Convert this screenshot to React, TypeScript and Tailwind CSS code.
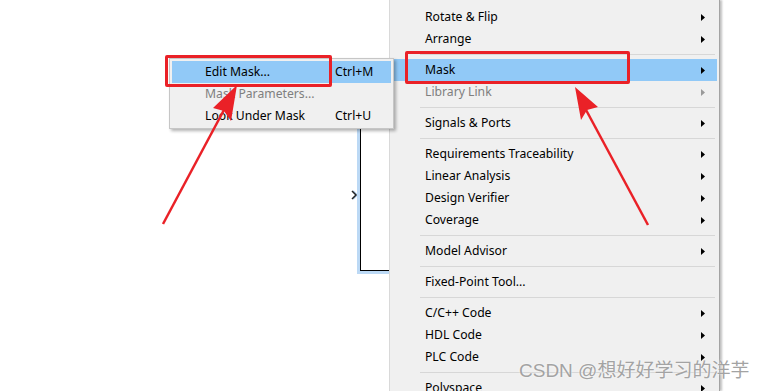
import React from "react";

type Item =
  | { kind: "item"; label: string; sub?: boolean; disabled?: boolean; active?: boolean }
  | { kind: "sep" };

const mainItems: Item[] = [
  { kind: "item", label: "Rotate & Flip", sub: true },
  { kind: "item", label: "Arrange", sub: true },
  { kind: "sep" },
  { kind: "item", label: "Mask", sub: true, active: true },
  { kind: "item", label: "Library Link", sub: true, disabled: true },
  { kind: "sep" },
  { kind: "item", label: "Signals & Ports", sub: true },
  { kind: "sep" },
  { kind: "item", label: "Requirements Traceability", sub: true },
  { kind: "item", label: "Linear Analysis", sub: true },
  { kind: "item", label: "Design Verifier", sub: true },
  { kind: "item", label: "Coverage", sub: true },
  { kind: "sep" },
  { kind: "item", label: "Model Advisor", sub: true },
  { kind: "sep" },
  { kind: "item", label: "Fixed-Point Tool..." },
  { kind: "sep" },
  { kind: "item", label: "C/C++ Code", sub: true },
  { kind: "item", label: "HDL Code", sub: true },
  { kind: "item", label: "PLC Code", sub: true },
  { kind: "sep" },
  { kind: "item", label: "Polyspace", sub: true },
];

const maskItems = [
  { label: "Edit Mask...", key: "Ctrl+M", active: true },
  { label: "Mask Parameters...", key: "", disabled: true },
  { label: "Look Under Mask", key: "Ctrl+U" },
];

const font = { fontFamily: '"Noto Sans", "Liberation Sans", sans-serif' };

function SubArrow({ disabled }: { disabled?: boolean }) {
  return (
    <svg width="4" height="7" viewBox="0 0 4 7" className="shrink-0">
      <polygon points="0,0 4,3.5 0,7" fill={disabled ? "#9a9a9a" : "#000"} />
    </svg>
  );
}

function MainMenu() {
  return (
    <div className="absolute left-[389px] top-0 w-[331px] h-[391px] bg-[#f0f0f0] border-l border-[#d9d9d9] border-r border-r-[#a3a3a3] shadow-[2px_0_2px_rgba(0,0,0,0.25)] pt-[6px] px-[2px]">
      {mainItems.map((it, i) =>
        it.kind === "sep" ? (
          <div key={i} className="h-[9px] flex items-center pl-[28px] pr-[2px]">
            <div className="h-px w-full bg-[#d7d7d7]" />
          </div>
        ) : (
          <div
            key={i}
            className={`h-[22px] flex items-center pl-[33px] pr-[12px] text-[12.2px] ${
              it.active ? "bg-[#91c9f7]" : ""
            } ${it.disabled ? "text-[#7f7f7f]" : "text-black"}`}
          >
            <span className="flex-1 whitespace-nowrap">{it.label}</span>
            {it.sub && <SubArrow disabled={it.disabled} />}
          </div>
        )
      )}
    </div>
  );
}

function MaskMenu() {
  return (
    <div className="absolute left-[169px] top-[58px] w-[225px] bg-[#f0f0f0] border border-[#c6c6c6] shadow-[2px_2px_3px_rgba(0,0,0,0.3)] pt-[2px] pb-px px-[2px]">
      {maskItems.map((it) => (
        <div
          key={it.label}
          className={`h-[22px] flex items-center pl-[33px] text-[12.2px] ${
            it.active ? "bg-[#91c9f7]" : ""
          } ${it.disabled ? "text-[#7f7f7f]" : "text-black"}`}
        >
          <span className="w-[130px] whitespace-nowrap">{it.label}</span>
          <span className="whitespace-nowrap">{it.key}</span>
        </div>
      ))}
    </div>
  );
}

function Block() {
  return (
    <>
      <div className="absolute left-[360px] top-[110px] w-[40px] h-[161px] border-l border-b border-black shadow-[-3px_3px_0_#bcd9f5]" />
      <svg className="absolute left-[351px] top-[190px]" width="8" height="10" viewBox="0 0 8 10">
        <path d="M2 1 L6 5 L2 9" fill="none" stroke="#bcd9f5" strokeWidth="2" />
        <path d="M1 1 L5 5 L1 9" fill="none" stroke="#222" strokeWidth="1.5" />
      </svg>
    </>
  );
}

export default function App() {
  return (
    <div className="relative w-[766px] h-[391px] overflow-hidden bg-white" style={font}>
      <Block />
      <MainMenu />
      <MaskMenu />

      {/* annotation boxes */}
      <div className="absolute left-[165px] top-[55px] w-[167px] h-[32px] border-[3px] border-[#ea2127] rounded-[2px]" />
      <div className="absolute left-[405px] top-[51px] w-[225px] h-[33px] border-[3px] border-[#ea2127] rounded-[2px]" />

      <svg className="absolute left-0 top-0 pointer-events-none" width="766" height="391">
        <line x1="163" y1="224" x2="225" y2="108" stroke="#ea2127" strokeWidth="2.5" />
        <polygon points="237,85 231,121 224,111 213,108" fill="#ea2127" />
        <line x1="648" y1="225" x2="585" y2="108" stroke="#ea2127" strokeWidth="2.5" />
        <polygon points="575,87 598,107 587,110 581,120" fill="#ea2127" />
      </svg>

      <div
        className="absolute left-[519px] top-[359px] text-[19px] leading-[24px] text-[#a3a3a3] whitespace-nowrap [text-shadow:0_0_2px_#fff]"
        style={{ fontFamily: '"Liberation Sans", "Noto Sans CJK SC", sans-serif' }}
      >
        CSDN @想好好学习的洋芋
      </div>
    </div>
  );
}
